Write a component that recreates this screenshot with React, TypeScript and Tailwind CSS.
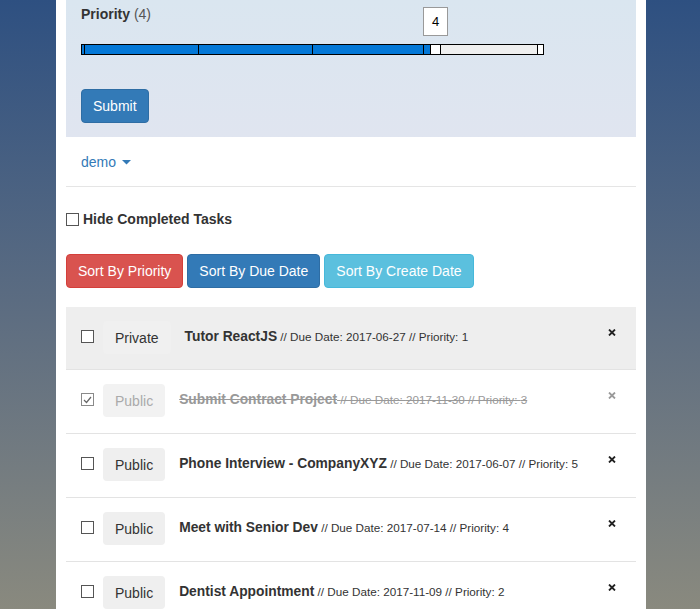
import React from "react";

interface Task {
  id: number;
  title: string;
  due: string;
  priority: number;
  label: string;
  done: boolean;
}

const tasks: Task[] = [
  { id: 1, title: "Tutor ReactJS", due: "2017-06-27", priority: 1, label: "Private", done: false },
  { id: 2, title: "Submit Contract Project", due: "2017-11-30", priority: 3, label: "Public", done: true },
  { id: 3, title: "Phone Interview - CompanyXYZ", due: "2017-06-07", priority: 5, label: "Public", done: false },
  { id: 4, title: "Meet with Senior Dev", due: "2017-07-14", priority: 4, label: "Public", done: false },
  { id: 5, title: "Dentist Appointment", due: "2017-11-09", priority: 2, label: "Public", done: false },
];

const Box = ({ checked }: { checked?: boolean }) => (
  <div
    className={`w-[13px] h-[13px] bg-white border flex items-center justify-center ${
      checked ? "border-[#8a8a8a]" : "border-[#555]"
    }`}
  >
    {checked && (
      <svg width="9" height="8" viewBox="0 0 9 8">
        <path d="M1 4 L3.5 6.5 L8 1" fill="none" stroke="#666" strokeWidth="1.2" />
      </svg>
    )}
  </div>
);

const Cross = ({ muted }: { muted?: boolean }) => (
  <svg width="8" height="7" viewBox="0 0 8 7">
    <path
      d="M1 0.5 L7 6.5 M7 0.5 L1 6.5"
      stroke={muted ? "#9a9a9a" : "#222"}
      strokeWidth="1.8"
    />
  </svg>
);

const PrioritySlider = () => (
  <div className="relative w-[463px] h-[11px] border border-black flex">
    <div className="w-[2px] bg-[#0478d7]" />
    <div className="w-[1px] bg-black" />
    <div className="w-[113px] bg-[#0478d7]" />
    <div className="w-[1px] bg-black" />
    <div className="w-[113px] bg-[#0478d7]" />
    <div className="w-[1px] bg-black" />
    <div className="w-[110px] bg-[#0478d7]" />
    <div className="w-[1px] bg-black" />
    <div className="w-[6px] bg-[#0478d7]" />
    <div className="w-[1px] bg-black" />
    <div className="w-[9px] bg-white" />
    <div className="w-[1px] bg-black" />
    <div className="w-[96px] bg-[#efefef]" />
    <div className="w-[1px] bg-black" />
    <div className="w-[5px] bg-white" />
    <div className="absolute left-[341px] top-[-38px] w-[25px] h-[29px] bg-white border border-[#999] flex items-center justify-center text-[13px] text-black">
      4
    </div>
  </div>
);

export default function App() {
  return (
    <div
      className="min-h-screen bg-gradient-to-b from-[#2e5081] via-[#5d6d81] to-[#8c8b7e]"
      style={{ fontFamily: '"Liberation Sans", Arial, sans-serif' }}
    >
      <div className="ml-[56px] w-[590px] min-h-screen bg-white px-[10px] text-[14px] text-[#333]">
        <div className="bg-gradient-to-b from-[#dae6f0] to-[#e0e5f0] px-[15px] pt-[4px] pb-[14px]">
          <div className="leading-[20px]">
            <span className="font-bold">Priority</span>{" "}
            <span className="text-[#555]">(4)</span>
          </div>
          <div className="mt-[20px]">
            <PrioritySlider />
          </div>
          <button className="mt-[34px] h-[34px] px-[11px] rounded-[4px] bg-[#337ab7] border border-[#2e6da4] text-white leading-[20px]">
            Submit
          </button>
        </div>

        <div className="px-[15px] pt-[15px] pb-[14px] border-b border-[#e5e5e5] leading-[20px]">
          <span className="text-[#337ab7] inline-flex items-center gap-[6px]">
            demo
            <svg width="9" height="5" viewBox="0 0 9 5">
              <path d="M0 0 L9 0 L4.5 4.5 Z" fill="#337ab7" />
            </svg>
          </span>
        </div>

        <div className="mt-[22px] flex items-center gap-[4px] leading-[20px]">
          <Box />
          <span className="font-bold">Hide Completed Tasks</span>
        </div>

        <div className="mt-[25px] flex gap-[4px]">
          <button className="h-[34px] px-[11px] rounded-[4px] bg-[#d9534f] border border-[#d43f3a] text-white">
            Sort By Priority
          </button>
          <button className="h-[34px] px-[11px] rounded-[4px] bg-[#337ab7] border border-[#2e6da4] text-white">
            Sort By Due Date
          </button>
          <button className="h-[34px] px-[11px] rounded-[4px] bg-[#5bc0de] border border-[#46b8da] text-white">
            Sort By Create Date
          </button>
        </div>

        <div className="mt-[19px]">
          {tasks.map((t, i) => (
            <div
              key={t.id}
              className={`flex items-start pl-[15px] pr-[20px] pt-[14px] border-b border-[#e3e3e3] ${
                i === 0 ? "bg-[#eeeeee] pb-[15px]" : "bg-white pb-[16px]"
              }`}
            >
              <div className="mt-[9px]">
                <Box checked={t.done} />
              </div>
              <div
                className={`ml-[9px] h-[33px] px-3 pt-[1px] rounded-[4px] flex items-center ${
                  t.done ? "bg-[#f2f2f2] text-[#aaa]" : "bg-[#efefef] text-[#333]"
                } ${i === 0 ? "bg-[#f0f0f0]" : ""}`}
              >
                {t.label}
              </div>
              <div
                className={`ml-[14px] mt-[6px] flex-1 leading-[20px] text-[13.8px] ${
                  t.done ? "line-through text-[#999]" : "text-[#333]"
                }`}
              >
                <span className="font-bold">{t.title}</span>
                <span className="text-[11.7px]">
                  {" "}
                  // Due Date: {t.due} // Priority: {t.priority}
                </span>
              </div>
              <div className="mt-[8px]">
                <Cross muted={t.done} />
              </div>
            </div>
          ))}
        </div>
      </div>
    </div>
  );
}
